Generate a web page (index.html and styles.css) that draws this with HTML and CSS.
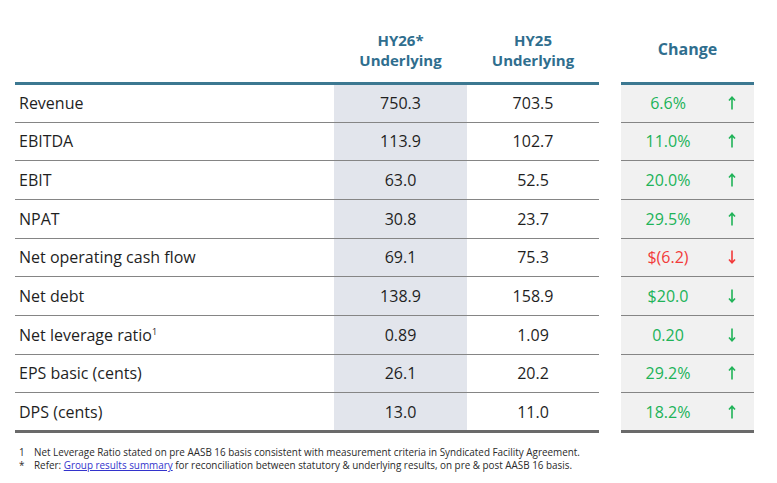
FILE: index.html
```html
<!DOCTYPE html>
<html lang="en">
<head>
<meta charset="utf-8">
<link rel="stylesheet" href="styles.css">
</head>
<body>
<div class="page">
  <div class="tables">
    <div class="main">
      <div class="head"></div>
      <div class="head">HY26*<br>Underlying</div>
      <div class="head">HY25<br>Underlying</div>

      <div class="cell label first">Revenue</div><div class="cell num shade first">750.3</div><div class="cell num first">703.5</div>
      <div class="cell label">EBITDA</div><div class="cell num shade">113.9</div><div class="cell num">102.7</div>
      <div class="cell label">EBIT</div><div class="cell num shade">63.0</div><div class="cell num">52.5</div>
      <div class="cell label">NPAT</div><div class="cell num shade">30.8</div><div class="cell num">23.7</div>
      <div class="cell label">Net operating cash flow</div><div class="cell num shade">69.1</div><div class="cell num">75.3</div>
      <div class="cell label">Net debt</div><div class="cell num shade">138.9</div><div class="cell num">158.9</div>
      <div class="cell label">Net leverage ratio<sup>1</sup></div><div class="cell num shade">0.89</div><div class="cell num">1.09</div>
      <div class="cell label">EPS basic (cents)</div><div class="cell num shade">26.1</div><div class="cell num">20.2</div>
      <div class="cell label last">DPS (cents)</div><div class="cell num shade last">13.0</div><div class="cell num last">11.0</div>
    </div>

    <div class="change">
      <div class="head span">Change</div>

      <div class="cell chg good first">6.6%</div><div class="cell arr good first"><svg class="up" viewBox="0 0 8 14"><path d="M4 13.5V1.2M1 4.5L4 1.2L7 4.5"/></svg></div>
      <div class="cell chg good">11.0%</div><div class="cell arr good"><svg class="up" viewBox="0 0 8 14"><path d="M4 13.5V1.2M1 4.5L4 1.2L7 4.5"/></svg></div>
      <div class="cell chg good">20.0%</div><div class="cell arr good"><svg class="up" viewBox="0 0 8 14"><path d="M4 13.5V1.2M1 4.5L4 1.2L7 4.5"/></svg></div>
      <div class="cell chg good">29.5%</div><div class="cell arr good"><svg class="up" viewBox="0 0 8 14"><path d="M4 13.5V1.2M1 4.5L4 1.2L7 4.5"/></svg></div>
      <div class="cell chg bad">$(6.2)</div><div class="cell arr bad"><svg class="up" viewBox="0 0 8 14"><path d="M4 0.5V12.8M1 9.5L4 12.8L7 9.5"/></svg></div>
      <div class="cell chg good">$20.0</div><div class="cell arr good"><svg class="up" viewBox="0 0 8 14"><path d="M4 0.5V12.8M1 9.5L4 12.8L7 9.5"/></svg></div>
      <div class="cell chg good">0.20</div><div class="cell arr good"><svg class="up" viewBox="0 0 8 14"><path d="M4 0.5V12.8M1 9.5L4 12.8L7 9.5"/></svg></div>
      <div class="cell chg good">29.2%</div><div class="cell arr good"><svg class="up" viewBox="0 0 8 14"><path d="M4 13.5V1.2M1 4.5L4 1.2L7 4.5"/></svg></div>
      <div class="cell chg good last">18.2%</div><div class="cell arr good last"><svg class="up" viewBox="0 0 8 14"><path d="M4 13.5V1.2M1 4.5L4 1.2L7 4.5"/></svg></div>
    </div>
  </div>

  <div class="notes">
    <div class="note"><span class="mark">1</span><span>Net Leverage Ratio stated on pre AASB 16 basis consistent with measurement criteria in Syndicated Facility Agreement.</span></div>
    <div class="note"><span class="mark">*</span><span>Refer: <a class="link" href="#">Group results summary</a> for reconciliation between statutory &amp; underlying results, on pre &amp; post AASB 16 basis.</span></div>
  </div>
</div>
</body>
</html>
```

FILE: styles.css
```css
html, body {
  margin: 0;
  padding: 0;
  background: #ffffff;
}
body {
  font-family: "Open Sans", "DejaVu Sans", sans-serif;
  color: #1f1f1f;
}
.page {
  width: 777px;
  height: 483px;
  padding: 24px 0 0 15px;
  box-sizing: border-box;
}
.tables {
  display: flex;
  gap: 22px;
  align-items: flex-start;
}
.main {
  display: grid;
  grid-template-columns: 319px 133px 132px;
  width: 584px;
}
.change {
  display: grid;
  grid-template-columns: 94px 39px;
  width: 133px;
}
.head {
  height: 58px;
  display: flex;
  align-items: center;
  justify-content: center;
  text-align: center;
  color: #2f6e8e;
  font-weight: 700;
  font-size: 15px;
  line-height: 20px;
  padding-bottom: 7px;
  box-sizing: border-box;
}
.head.span {
  grid-column: 1 / 3;
  font-size: 16px;
  padding-bottom: 9px;
}
.cell {
  height: 38.67px;
  box-sizing: border-box;
  border-bottom: 1.5px solid #858585;
  display: flex;
  align-items: center;
  font-size: 16px;
}
.cell.first {
  border-top: 3px solid #3c7891;
  height: 40.67px;
}
.cell.last {
  border-bottom: 3px solid #6a6a6a;
  height: 40.17px;
}
.label {
  padding-left: 4px;
}
.label sup {
  font-size: 9px;
  vertical-align: top;
  position: relative;
  top: -3px;
}
.num {
  justify-content: center;
}
.shade {
  background: #e2e5ec;
}
.change .cell {
  background: #f1f1f1;
}
.chg {
  justify-content: center;
}
.arr {
  justify-content: center;
  padding-right: 6px;
}
.good {
  color: #20b358;
}
.bad {
  color: #f23a3a;
}
.up {
  width: 8px;
  height: 14px;
  fill: none;
  stroke: currentColor;
  stroke-width: 1.6;
}
.notes {
  margin-top: 13px;
  font-size: 9.9px;
  color: #2a2a2a;
  line-height: 13px;
}
.note {
  display: flex;
}
.mark {
  width: 19px;
  padding-left: 4px;
  box-sizing: border-box;
  flex: none;
}
.link {
  color: #3333cc;
  text-decoration: underline;
}
```
